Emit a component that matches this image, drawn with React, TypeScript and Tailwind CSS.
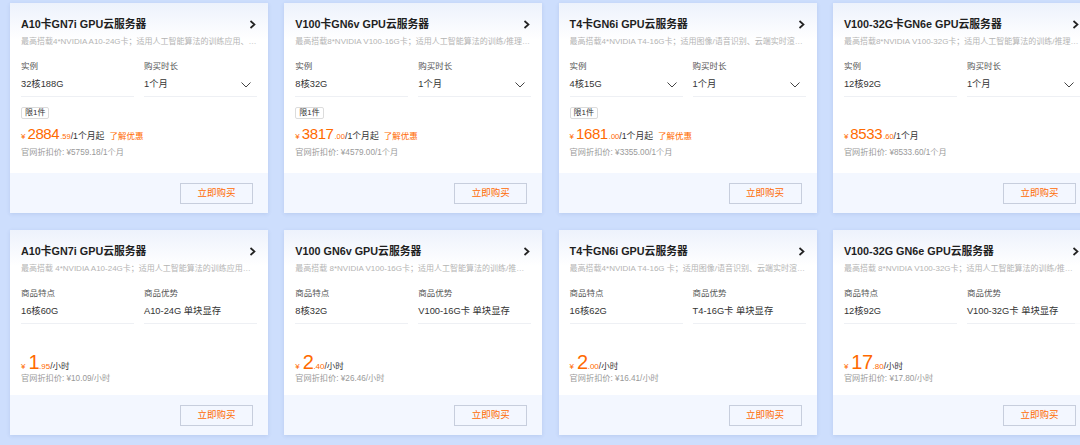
import React from 'react';

type Row = { label: string; value: string; arrow?: boolean };

type Card = {
  title: string;
  desc: string;
  rows: [Row, Row];
  badge?: boolean;
  int: string;
  dec: string;
  unit: string;
  promo?: boolean;
  orig: string;
};

const top: Card[] = [
  {
    title: 'A10卡GN7i GPU云服务器',
    desc: '最高搭载4*NVIDIA A10-24G卡；适用人工智能算法的训练应用、推理应用',
    rows: [
      { label: '实例', value: '32核188G' },
      { label: '购买时长', value: '1个月', arrow: true },
    ],
    badge: true,
    int: '2884',
    dec: '.59',
    unit: '/1个月起',
    promo: true,
    orig: '官网折扣价: ¥5759.18/1个月',
  },
  {
    title: 'V100卡GN6v GPU云服务器',
    desc: '最高搭载8*NVIDIA V100-16G卡；适用人工智能算法的训练/推理应用',
    rows: [
      { label: '实例', value: '8核32G' },
      { label: '购买时长', value: '1个月', arrow: true },
    ],
    badge: true,
    int: '3817',
    dec: '.00',
    unit: '/1个月起',
    promo: true,
    orig: '官网折扣价: ¥4579.00/1个月',
  },
  {
    title: 'T4卡GN6i GPU云服务器',
    desc: '最高搭载4*NVIDIA T4-16G卡；适用图像/语音识别、云端实时渲染、视频转码',
    rows: [
      { label: '实例', value: '4核15G', arrow: true },
      { label: '购买时长', value: '1个月', arrow: true },
    ],
    badge: true,
    int: '1681',
    dec: '.00',
    unit: '/1个月起',
    promo: true,
    orig: '官网折扣价: ¥3355.00/1个月',
  },
  {
    title: 'V100-32G卡GN6e GPU云服务器',
    desc: '最高搭载8*NVIDIA V100-32G卡；适用人工智能算法的训练/推理应用',
    rows: [
      { label: '实例', value: '12核92G' },
      { label: '购买时长', value: '1个月', arrow: true },
    ],
    int: '8533',
    dec: '.60',
    unit: '/1个月',
    orig: '官网折扣价: ¥8533.60/1个月',
  },
];

const bottom: Card[] = [
  {
    title: 'A10卡GN7i GPU云服务器',
    desc: '最高搭载 4*NVIDIA A10-24G卡；适用人工智能算法的训练应用、推理应用',
    rows: [
      { label: '商品特点', value: '16核60G' },
      { label: '商品优势', value: 'A10-24G 单块显存' },
    ],
    int: '1',
    dec: '.95',
    unit: '/小时',
    orig: '官网折扣价: ¥10.09/小时',
  },
  {
    title: 'V100 GN6v GPU云服务器',
    desc: '最高搭载 8*NVIDIA V100-16G卡；适用人工智能算法的训练/推理应用',
    rows: [
      { label: '商品特点', value: '8核32G' },
      { label: '商品优势', value: 'V100-16G卡 单块显存' },
    ],
    int: '2',
    dec: '.40',
    unit: '/小时',
    orig: '官网折扣价: ¥26.46/小时',
  },
  {
    title: 'T4卡GN6i GPU云服务器',
    desc: '最高搭载4*NVIDIA T4-16G 卡；适用图像/语音识别、云端实时渲染、视频转码',
    rows: [
      { label: '商品特点', value: '16核62G' },
      { label: '商品优势', value: 'T4-16G卡 单块显存' },
    ],
    int: '2',
    dec: '.00',
    unit: '/小时',
    orig: '官网折扣价: ¥16.41/小时',
  },
  {
    title: 'V100-32G GN6e GPU云服务器',
    desc: '最高搭载 8*NVIDIA V100-32G卡；适用人工智能算法的训练/推理应用',
    rows: [
      { label: '商品特点', value: '12核92G' },
      { label: '商品优势', value: 'V100-32G卡 单块显存' },
    ],
    int: '17',
    dec: '.80',
    unit: '/小时',
    orig: '官网折扣价: ¥17.80/小时',
  },
];

function ChevronRight() {
  return (
    <svg width="7" height="9" viewBox="0 0 7 9" className="shrink-0">
      <polyline points="1.5,1 5.5,4.5 1.5,8" fill="none" stroke="#222" strokeWidth="1.7" />
    </svg>
  );
}

function ChevronDown() {
  return (
    <svg width="10" height="6" viewBox="0 0 10 6" className="shrink-0">
      <polyline points="0.5,0.5 5,5 9.5,0.5" fill="none" stroke="#444" strokeWidth="1" />
    </svg>
  );
}

function ProductCard({ card, hourly }: { card: Card; hourly?: boolean }) {
  return (
    <div className="w-[258px] bg-white shadow-[0_1px_4px_rgba(40,70,140,0.12)]">
      <div
        className={`bg-linear-to-b from-[#edf2fc] to-white to-[22%] px-[11px] pt-[13px] ${
          hourly ? 'h-[165px]' : 'h-[170px]'
        }`}
      >
        <div className="flex h-[16px] items-center justify-between pr-[1px]">
          <span className="text-[10.8px] font-bold leading-[16px] text-[#1f1f1f]">{card.title}</span>
          <ChevronRight />
        </div>
        <div className="mt-[4px] truncate text-[8px] leading-[12px] text-[#b4b4b4]">{card.desc}</div>

        <div className="mt-[11px] grid grid-cols-2 gap-x-[10px]">
          {card.rows.map((r) => (
            <div key={r.label}>
              <div className="text-[8.5px] leading-[14px] text-[#555]">{r.label}</div>
              <div className="mt-[3px] flex h-[21px] items-start justify-between border-b border-[#eef0f4] pr-[6px]">
                <span className="whitespace-nowrap text-[9.3px] leading-[16px] text-[#333]">{r.value}</span>
                {r.arrow && (
                  <span className="mt-[6px]">
                    <ChevronDown />
                  </span>
                )}
              </div>
            </div>
          ))}
        </div>

        {hourly ? (
          <div className="mt-[29px] flex h-[18px] items-baseline whitespace-nowrap text-[#ff6a00]">
            <span className="mr-[3px] text-[8px]">¥</span>
            <span className="text-[20px] leading-[18px] tracking-[-0.5px]">{card.int}</span>
            <span className="text-[8px]">{card.dec}</span>
            <span className="text-[8.5px] text-[#333]">{card.unit}</span>
          </div>
        ) : (
          <>
            <div className="mt-[10px] flex h-[12px]">
              {card.badge && (
                <span className="h-[12px] rounded-[2px] border border-[#dcdcdc] px-[3px] text-[8px] leading-[10px] text-[#333]">
                  限1件
                </span>
              )}
            </div>
            <div className="mt-[6px] flex h-[18px] items-baseline whitespace-nowrap text-[#ff6a00]">
              <span className="mr-[2px] text-[8px]">¥</span>
              <span className="text-[15px] leading-[18px] tracking-[-0.4px]">{card.int}</span>
              <span className="ml-[1px] text-[7.5px]">{card.dec}</span>
              <span className="text-[8.8px] text-[#333]">{card.unit}</span>
              {card.promo && <span className="ml-[5px] text-[8.5px] text-[#ff6a00]">了解优惠</span>}
            </div>
          </>
        )}

        <div className={`${hourly ? 'mt-[2px]' : 'mt-[4px]'} text-[8.2px] leading-[12px] text-[#999]`}>
          {card.orig}
        </div>
      </div>
      <div className="flex h-[40px] items-center justify-end bg-[#f3f7ff] pr-[15px]">
        <button className="h-[21px] w-[73px] border border-[#c7cedd] text-[9.5px] text-[#ff6a00]">
          立即购买
        </button>
      </div>
    </div>
  );
}

export default function App() {
  return (
    <div className="relative h-[445px] w-[1080px] overflow-hidden bg-[#cddefd] font-['Liberation_Sans','Noto_Sans_CJK_SC',sans-serif]">
      <div className="grid grid-cols-[repeat(4,258px)] gap-x-[16.3px] gap-y-[17px] pl-[10px] pt-[3px]">
        {top.map((c) => (
          <ProductCard key={c.title + 'm'} card={c} />
        ))}
        {bottom.map((c) => (
          <ProductCard key={c.title + 'h'} card={c} hourly />
        ))}
      </div>
      {/* floating side widget, mostly off-screen */}
      <div className="absolute right-0 top-[290px] h-[96px] w-[5px] rounded-l-[6px] bg-white/70" />
    </div>
  );
}
